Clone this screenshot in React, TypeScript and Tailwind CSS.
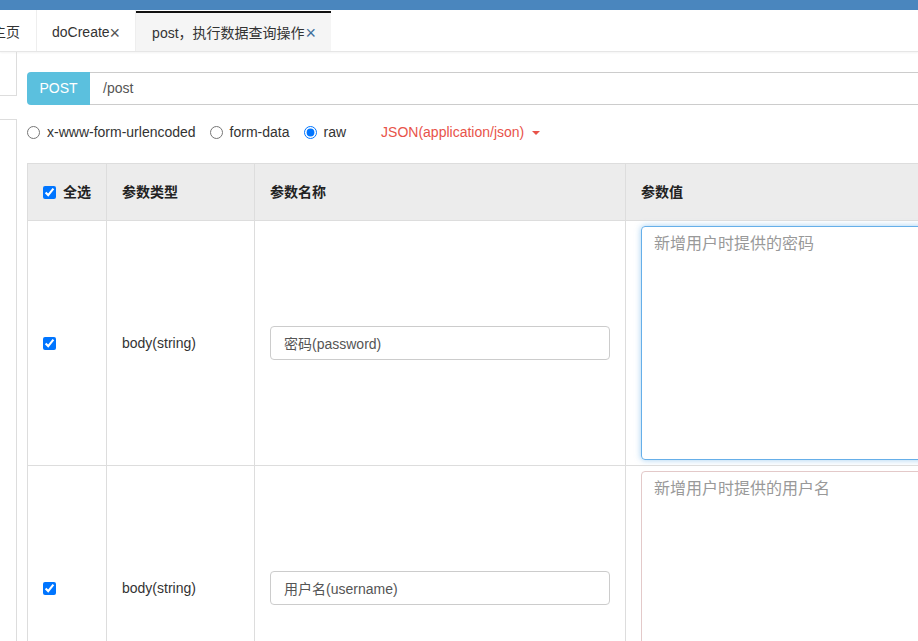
import React from 'react'

const latin = { fontFamily: '"Liberation Sans", "Noto Sans CJK SC", Arial, sans-serif' }

interface Param {
  type: string
  name: string
  hint: string
  focused: boolean
}

const params: Param[] = [
  { type: 'body(string)', name: '密码(password)', hint: '新增用户时提供的密码', focused: true },
  { type: 'body(string)', name: '用户名(username)', hint: '新增用户时提供的用户名', focused: false },
]

function Tabs() {
  return (
    <div className="flex h-[42px] border-b border-[#e6e6e6] shadow-[0_1px_2px_rgba(0,0,0,0.05)] bg-white text-[14px] text-[#333]">
      <div className="ml-[-24px] flex items-center pt-1 px-4 border-r border-[#eee] whitespace-nowrap">主页</div>
      <div className="flex items-center pt-1 px-[15px] border-r border-[#eee] whitespace-nowrap">
        doCreate<span className="text-[#555] text-[18px] leading-none">×</span>
      </div>
      <div className="flex items-center pt-[2px] pl-4 pr-[15px] bg-[#f5f5f5] border-t-2 border-[#111] mt-px whitespace-nowrap">
        post，执行数据查询操作<span className="ml-px text-[#3f6f9c] text-[18px] leading-none">×</span>
      </div>
    </div>
  )
}

function Radio({ label, checked }: { label: string; checked?: boolean }) {
  return (
    <label className="flex items-center mr-[14px]">
      <input type="radio" name="ctype" defaultChecked={checked} className="m-0 mr-[7px] w-[13px] h-[13px]" />
      {label}
    </label>
  )
}

export default function App() {
  return (
    <div className="w-[918px] h-[641px] overflow-hidden bg-white text-[14px] text-[#333]" style={latin}>
      <div className="h-[10px] bg-[#4a86be]" />
      <Tabs />
      <div className="flex">
        <div className="w-[17px] shrink-0 flex flex-col">
          <div className="h-[44px] border-r border-b border-[#ddd]" />
          <div className="mt-[23px] h-[600px] border-r border-t border-[#ddd]" />
        </div>
        <div className="ml-[10px] pt-5 w-[1000px] shrink-0">
          <div className="flex h-[33px]">
            <div className="w-[63px] flex items-center justify-center rounded-l-[4px] bg-[#5bc0de] text-white">POST</div>
            <div className="flex-1 flex items-center pl-[13px] border border-[#ccc] border-l-0 text-[#555]">/post</div>
          </div>
          <div className="flex items-center h-[58px] pb-[3px]">
            <Radio label="x-www-form-urlencoded" />
            <Radio label="form-data" />
            <Radio label="raw" checked />
            <span className="ml-[21px] text-[#e8534a] flex items-center">
              JSON(application/json)
              <span className="ml-[8px] w-0 h-0 border-x-[4px] border-x-transparent border-t-[4px] border-t-[#e8534a]" />
            </span>
          </div>
          <table className="table-fixed border-collapse w-[1000px]">
            <colgroup>
              <col className="w-[79px]" />
              <col className="w-[148px]" />
              <col className="w-[371px]" />
              <col />
            </colgroup>
            <thead>
              <tr className="h-[57px] bg-[#ececec] font-bold text-[#222]">
                <th className="border border-[#ddd] px-[15px] text-left align-middle">
                  <label className="flex items-center whitespace-nowrap">
                    <input type="checkbox" defaultChecked className="m-0 mr-[7px] w-[13px] h-[13px]" />
                    全选
                  </label>
                </th>
                <th className="border border-[#ddd] px-[15px] text-left whitespace-nowrap">参数类型</th>
                <th className="border border-[#ddd] px-[15px] text-left whitespace-nowrap">参数名称</th>
                <th className="border border-[#ddd] px-[15px] text-left whitespace-nowrap">参数值</th>
              </tr>
            </thead>
            <tbody>
              {params.map((p) => (
                <tr key={p.name} className="h-[245px]">
                  <td className="border border-[#ddd] px-[15px] align-middle">
                    <input type="checkbox" defaultChecked className="m-0 block w-[13px] h-[13px]" />
                  </td>
                  <td className="border border-[#ddd] px-[15px] align-middle">{p.type}</td>
                  <td className="border border-[#ddd] px-[15px] align-middle">
                    <input
                      type="text"
                      defaultValue={p.name}
                      className="block w-full h-[34px] px-[13px] rounded-[4px] border border-[#ccc] text-[#555] outline-none"
                    />
                  </td>
                  <td className="border border-[#ddd] px-[15px] align-middle">
                    <textarea
                      placeholder={p.hint}
                      className={
                        p.focused
                          ? 'block w-full h-[234px] px-3 py-[6px] rounded-[4px] border border-[#66afe9] shadow-[0_0_6px_rgba(102,175,233,0.6)] text-[16px] leading-[22px] placeholder:text-[#999] outline-none resize-none'
                          : 'block w-full h-[234px] px-3 py-[6px] rounded-[4px] border border-[#e3c9c9] text-[16px] leading-[22px] placeholder:text-[#999] outline-none resize-none'
                      }
                    />
                  </td>
                </tr>
              ))}
            </tbody>
          </table>
        </div>
      </div>
    </div>
  )
}
